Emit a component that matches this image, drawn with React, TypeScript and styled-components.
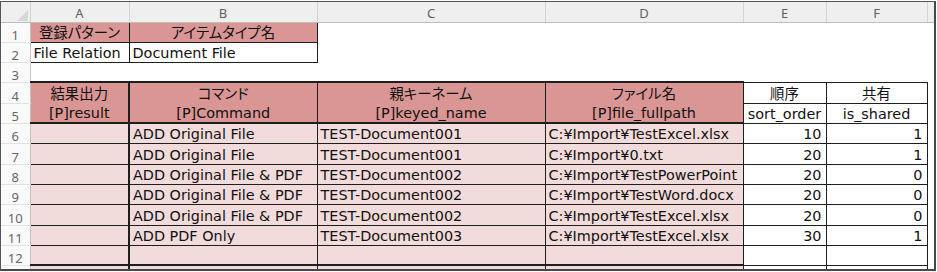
import styled, { createGlobalStyle } from "styled-components";

const GlobalStyle = createGlobalStyle`
  html, body {
    margin: 0;
    padding: 0;
    background: #ffffff;
  }
  body {
    width: 937px;
    height: 272px;
    overflow: hidden;
  }
`;

type Fill = "head" | "light" | "white" | "none";
type Align = "left" | "center" | "right";

const fills: Record<Fill, string> = {
  head: "#da9694",
  light: "#f2dcdb",
  white: "#ffffff",
  none: "transparent",
};

interface CellSpec {
  text?: string;
  fill: Fill;
  align?: Align;
  t?: number;
  r?: number;
  b?: number;
  l?: number;
}

const colWidths = [29, 99, 188, 228, 198, 83, 101, 7];
const colLetters = ["A", "B", "C", "D", "E", "F", ""];
const rowHeights = [20, 20, 20, 21, 20, 20, 21, 20, 20, 21, 20, 20, 8];

const empty = (): CellSpec => ({ fill: "none" });

const records = [
  ["ADD Original File", "TEST-Document001", "C:¥Import¥TestExcel.xlsx", "10", "1"],
  ["ADD Original File", "TEST-Document001", "C:¥Import¥0.txt", "20", "1"],
  ["ADD Original File & PDF", "TEST-Document002", "C:¥Import¥TestPowerPoint", "20", "0"],
  ["ADD Original File & PDF", "TEST-Document002", "C:¥Import¥TestWord.docx", "20", "0"],
  ["ADD Original File & PDF", "TEST-Document002", "C:¥Import¥TestExcel.xlsx", "20", "0"],
  ["ADD PDF Only", "TEST-Document003", "C:¥Import¥TestExcel.xlsx", "30", "1"],
];

const dataRow = (vals: string[], bottom: number): CellSpec[] => [
  { fill: "light", r: 2, b: bottom },
  { text: vals[0], fill: "light", r: 1, b: bottom },
  { text: vals[1], fill: "light", r: 1, b: bottom },
  { text: vals[2], fill: "light", r: 1, b: bottom },
  { text: vals[3], fill: "white", align: "right", r: 1, b: 1 },
  { text: vals[4], fill: "white", align: "right", r: 1, b: 1 },
  empty(),
];

const rows: CellSpec[][] = [
  [
    { text: "登録パターン", fill: "head", align: "center", t: 1, r: 1, b: 1 },
    { text: "アイテムタイプ名", fill: "head", align: "center", t: 1, r: 1, b: 1 },
    empty(), empty(), empty(), empty(), empty(),
  ],
  [
    { text: "File Relation", fill: "white", r: 1, b: 1 },
    { text: "Document File", fill: "white", r: 1, b: 1 },
    empty(), empty(), empty(), empty(), empty(),
  ],
  [empty(), empty(), empty(), empty(), empty(), empty(), empty()],
  [
    { text: "結果出力", fill: "head", align: "center", t: 2, r: 2 },
    { text: "コマンド", fill: "head", align: "center", t: 2, r: 1 },
    { text: "親キーネーム", fill: "head", align: "center", t: 2, r: 1 },
    { text: "ファイル名", fill: "head", align: "center", t: 2, r: 1 },
    { text: "順序", fill: "white", align: "center", t: 1, r: 1, b: 1 },
    { text: "共有", fill: "white", align: "center", t: 1, r: 1, b: 1 },
    empty(),
  ],
  [
    { text: "[P]result", fill: "head", align: "center", r: 2, b: 2 },
    { text: "[P]Command", fill: "head", align: "center", r: 1, b: 2 },
    { text: "[P]keyed_name", fill: "head", align: "center", r: 1, b: 2 },
    { text: "[P]file_fullpath", fill: "head", align: "center", r: 1, b: 2 },
    { text: "sort_order", fill: "white", align: "center", r: 1, b: 1 },
    { text: "is_shared", fill: "white", align: "center", r: 1, b: 1 },
    empty(),
  ],
  ...records.map((rec) => dataRow(rec, 1)),
  dataRow(["", "", "", "", ""], 2),
  dataRow(["", "", "", "", ""], 0),
];

const line = (w?: number) => (w ? `${w}px solid #1e1e1e` : "none");

export default function App() {
  return (
    <>
      <GlobalStyle />
      <Frame>
        <Sheet>
          <colgroup>
            {colWidths.map((w, i) => (
              <col key={i} style={{ width: w }} />
            ))}
          </colgroup>
          <thead>
            <Row $h={20}>
              <Corner>
                <svg width="11" height="11" viewBox="0 0 11 11">
                  <polygon points="11,0 11,11 0,11" fill="#d7d7d7" />
                </svg>
              </Corner>
              {colLetters.map((c, i) => (
                <ColHead key={i}>{c}</ColHead>
              ))}
            </Row>
          </thead>
          <tbody>
            {rows.map((cells, ri) => (
              <Row key={ri} $h={rowHeights[ri]}>
                <RowHead>{ri < 12 ? ri + 1 : ""}</RowHead>
                {cells.map((c, ci) => (
                  <Cell
                    key={ci}
                    $fill={c.fill}
                    $align={c.align ?? "left"}
                    $t={c.t}
                    $r={c.r}
                    $b={c.b}
                    $l={c.l}
                  >
                    {c.text}
                  </Cell>
                ))}
              </Row>
            ))}
          </tbody>
        </Sheet>
      </Frame>
    </>
  );
}

const Frame = styled.div`
  margin-top: 1px;
  width: 933px;
  height: 267px;
  border-top: 1px solid #555555;
  border-left: 1px solid #555555;
  border-right: 2px solid #484848;
  border-bottom: 2px solid #484848;
  overflow: hidden;
  background: #ffffff;
`;

const Sheet = styled.table`
  border-collapse: collapse;
  table-layout: fixed;
  width: 933px;
  font-family: "DejaVu Sans", "Noto Sans CJK JP", sans-serif;
  font-size: 14.4px;
  color: #111111;
`;

const Row = styled.tr<{ $h: number }>`
  height: ${(p) => p.$h}px;
`;

const Corner = styled.th`
  padding: 0 2px 1px 0;
  background: #efefef;
  border-right: 1px solid #d4d4d4;
  border-bottom: 1px solid #bdbdbd;
  text-align: right;
  vertical-align: bottom;
  line-height: 0;

  & > svg {
    display: inline-block;
  }
`;

const ColHead = styled.th`
  padding: 2px 0 0;
  background: #efefef;
  border-right: 1px solid #d4d4d4;
  border-bottom: 1px solid #bdbdbd;
  font-family: "Noto Sans", sans-serif;
  font-size: 13px;
  font-weight: 400;
  line-height: 16px;
  color: #5f5f5f;
  text-align: center;
  vertical-align: middle;
`;

const RowHead = styled.th`
  padding: 0;
  background: #fafafa;
  border-right: 1px solid #c4c4c4;
  border-bottom: 1px solid #e2e2e2;
  font-family: "Noto Sans", sans-serif;
  font-size: 13px;
  font-weight: 400;
  line-height: 14px;
  color: #666666;
  text-align: center;
  vertical-align: bottom;
`;

const Cell = styled.td<{
  $fill: Fill;
  $align: Align;
  $t?: number;
  $r?: number;
  $b?: number;
  $l?: number;
}>`
  padding: 0 ${(p) => (p.$align === "right" ? 4 : 3)}px 1px 3px;
  overflow: hidden;
  white-space: nowrap;
  vertical-align: bottom;
  line-height: 16px;
  text-align: ${(p) => p.$align};
  background: ${(p) => fills[p.$fill]};
  border-top: ${(p) => line(p.$t)};
  border-right: ${(p) => line(p.$r)};
  border-bottom: ${(p) => line(p.$b)};
  border-left: ${(p) => line(p.$l)};
  font-feature-settings: "palt";
`;
